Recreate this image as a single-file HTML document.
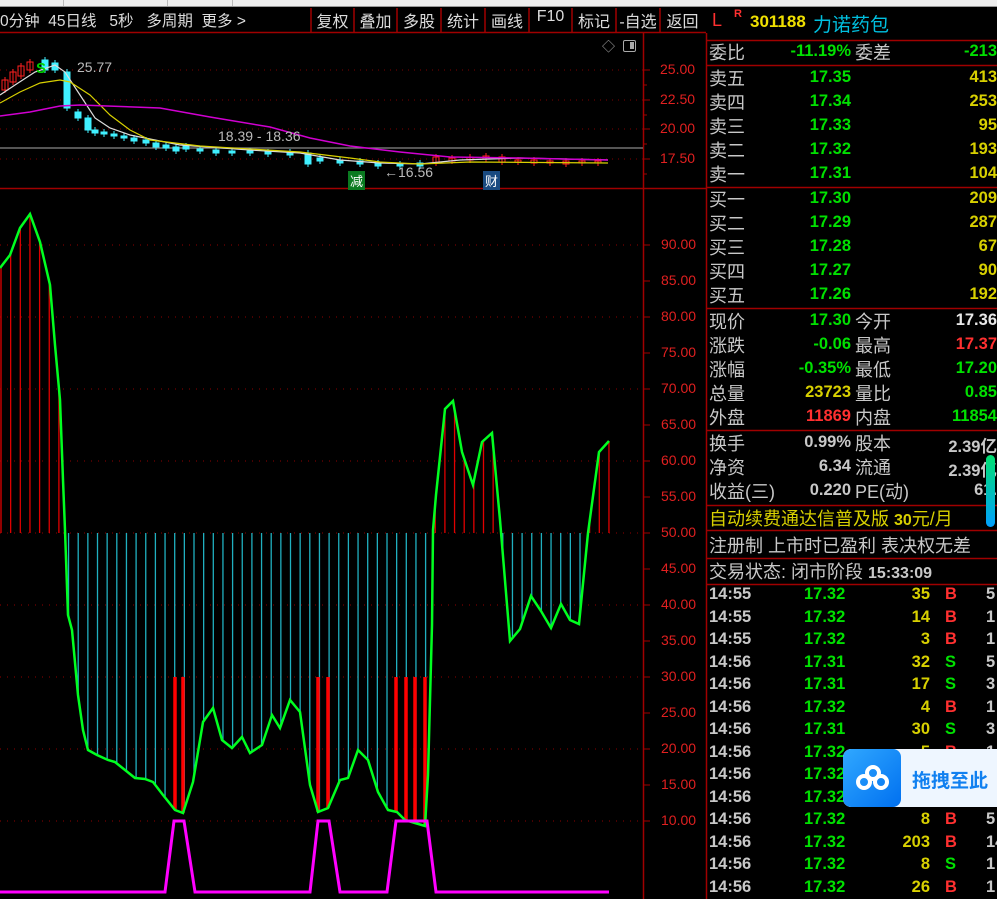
<!DOCTYPE html>
<html><head><meta charset="utf-8">
<style>
*{margin:0;padding:0;box-sizing:border-box}
body{width:997px;height:899px;background:#000;overflow:hidden;position:relative;font-family:"Liberation Sans","Noto Sans CJK SC",sans-serif}
.a{position:absolute;white-space:nowrap}
.g{color:#c8c8c8}
.gr{color:#00e000;font-weight:bold}
.y{color:#d8d000;font-weight:bold}
.r{color:#ff3030;font-weight:bold}
.w{color:#e8e8e8;font-weight:bold}
.gy{color:#c8c8c8;font-weight:bold}
.lab{font-size:18px;color:#c8c8c8;left:709px}
.num{font-size:16.5px;text-align:right}
</style></head><body>
<div class="a" style="left:0;top:0;width:997px;height:7px;background:#eeeeee;border-bottom:1px solid #999"></div>
<div class="a" style="left:63px;top:0;width:1px;height:6px;background:#bbb"></div>
<div class="a" style="left:167px;top:0;width:1px;height:6px;background:#bbb"></div>
<div class="a" style="left:232px;top:0;width:1px;height:6px;background:#bbb"></div>
<svg class="a" style="left:0;top:0" width="997" height="899" id="sv"></svg>
<div class="a g" style="left:0;top:9px;font-size:15.5px;color:#ddd">0分钟&nbsp;&nbsp;45日线&nbsp;&nbsp;&nbsp;5秒&nbsp;&nbsp;&nbsp;多周期&nbsp;&nbsp;更多 &gt;</div>
<div class="a" style="top:8px;left:311px;font-size:16px;color:#ddd;width:395px;display:flex">
<span style="width:43px;text-align:center">复权</span><span style="width:43px;text-align:center">叠加</span><span style="width:44px;text-align:center">多股</span><span style="width:44px;text-align:center">统计</span><span style="width:44px;text-align:center">画线</span><span style="width:43px;text-align:center">F10</span><span style="width:44px;text-align:center">标记</span><span style="width:44px;text-align:center">-自选</span><span style="width:45px;text-align:center">返回</span></div>
<div class="a" style="left:602px;top:36px;color:#aaa;font-size:13px">◇</div>
<div class="a" style="left:623px;top:40px;width:13px;height:12px;border:1.5px solid #aaa;border-radius:2px"><div style="position:absolute;right:1px;top:1px;width:4px;height:7px;background:#aaa"></div></div>
<div class="a" style="left:218px;top:128px;color:#bbb;font-size:14px">18.39 - 18.36</div>
<div class="a" style="left:77px;top:59px;color:#bbb;font-size:14px">25.77</div>
<div class="a" style="left:36px;top:60px;color:#00d000;font-size:15px;font-weight:bold">S</div>
<div class="a" style="left:384px;top:164px;color:#bbb;font-size:14px">←16.56</div>
<div class="a" style="left:348px;top:171px;background:#0a7a20;color:#fff;font-size:13px;padding:0 2px">减</div>
<div class="a" style="left:483px;top:171px;background:#1a4a80;color:#fff;font-size:13px;padding:0 2px">财</div>
<div id="pl"></div>
<div class="a" style="left:712px;top:10px;color:#ff3030;font-size:18px">L</div>
<div class="a" style="left:734px;top:8px;color:#ff3030;font-size:11px;font-weight:bold">R</div>
<div class="a" style="left:750px;top:12px;color:#f0e000;font-size:17px;font-weight:bold">301188</div>
<div class="a" style="left:813px;top:10px;color:#00c0e0;font-size:19px">力诺药包</div>
<div id="rp"></div>
<div class="a" style="left:986px;top:455px;width:9px;height:72px;border-radius:5px;background:linear-gradient(#00e070,#00a0ff)"></div>
<div class="a" style="left:843px;top:749px;width:154px;height:58px;background:#eef6ff;border-radius:8px 0 0 8px;overflow:hidden">
<div style="position:absolute;left:0;top:0;width:58px;height:58px;background:linear-gradient(135deg,#30a8ff,#0070f0);border-radius:8px"></div>
<svg style="position:absolute;left:13px;top:16px" width="34" height="26"><g fill="none" stroke="#fff" stroke-width="4"><circle cx="17" cy="8" r="6"/><circle cx="8" cy="17" r="6"/><circle cx="25" cy="17" r="6"/></g></svg>
<div style="position:absolute;left:69px;top:17px;color:#1080f0;font-size:19px;font-weight:bold">拖拽至此</div></div>
<script>
const S=document.getElementById('sv');let h='';
const L=(x1,y1,x2,y2,c,w,d)=>h+=`<line x1="${x1}" y1="${y1}" x2="${x2}" y2="${y2}" stroke="${c}" stroke-width="${w||1}" ${d?'stroke-dasharray="'+d+'"':''}/>`;
const P=(pts,c,w)=>h+=`<polyline fill="none" stroke="${c}" stroke-width="${w}" points="${pts.map(p=>p.join(',')).join(' ')}"/>`;
L(0,32.5,706,32.5,'#a00000',1.5);
[311,354,397,441,485,529,572,616,660].forEach(x=>L(x,8,x,32,'#a00000',1.5));
L(0,188.5,706,188.5,'#a00000',1.5);
L(643.5,33,643.5,899,'#a00000',1.5);
L(706.5,33,706.5,899,'#a00000',1.5);
[70,100,129,159].forEach(y=>{L(0,y,643,y,'#800000',1,'1 5');L(643,y,650,y,'#a00000',1)});
[85,115,144,174].forEach(y=>L(643,y,647,y,'#a00000',1));
L(0,148,643,148,'#888',1.2);
let t='';
[['25.00',70],['22.50',100],['20.00',129],['17.50',159]].forEach(a=>t+=`<div class="a" style="left:660px;top:${a[1]-9}px;color:#e02020;font-size:14px">${a[0]}</div>`);
const cy=[[5,80,90,'r'],[13,72,82,'r'],[21,66,76,'r'],[30,62,70,'r'],[45,60,70,'c'],[55,63,70,'c'],[67,72,108,'c'],[78,112,118,'c'],[88,118,130,'c'],[95,130,133,'c'],[104,132,134,'c'],[114,134,136,'c'],[124,136,138,'c'],[134,138,141,'c'],[146,140,143,'c'],[156,143,147,'c'],[166,145,148,'c'],[176,147,151,'c'],[186,146,149,'c'],[200,149,151,'c'],[216,150,153,'c'],[232,151,153,'c'],[250,151,153,'c'],[268,152,154,'c'],[290,152,155,'c'],[308,153,164,'c'],[320,158,161,'c'],[340,160,163,'c'],[360,161,164,'c'],[378,163,166,'c'],[400,164,166,'c'],[420,163,166,'c'],[436,157,163,'r'],[452,158,161,'r'],[470,157,160,'r'],[486,156,159,'r'],[502,157,162,'r'],[518,160,162,'r'],[534,160,163,'r'],[550,161,163,'r'],[566,161,164,'r'],[582,161,163,'r'],[598,161,163,'r']];
cy.forEach(c=>{const col=c[3]=='r'?'#ff2020':'#40f0ff';h+=`<line x1="${c[0]}" y1="${c[1]-3}" x2="${c[0]}" y2="${c[2]+3}" stroke="${col}"/><rect x="${c[0]-3}" y="${c[1]}" width="6" height="${c[2]-c[1]}" fill="${c[3]=='r'?'none':col}" stroke="${col}"/>`});
P([[0,95],[15,85],[35,72],[55,65],[65,72],[80,95],[95,118],[110,128],[130,135],[180,145],[250,150],[300,153],[340,160],[380,163],[420,164],[460,160],[520,158],[608,160]],'#ddd',1.2);
P([[0,103],[20,92],[40,83],[60,80],[70,82],[90,95],[110,115],[130,130],[150,140],[200,146],[300,152],[350,158],[380,162],[420,164],[470,162],[608,163]],'#d8d000',1.2);
P([[0,116],[30,112],[60,106],[80,105],[160,108],[210,117],[270,127],[310,138],[350,146],[400,152],[450,157],[520,158],[608,160]],'#d000d0',1.5);
const Y=v=>533-(v-50)*7.2;
[90,80,70,60,50,40,30,20,10].forEach(v=>L(0,Y(v),643,Y(v),'#900000',1,'1 6'));
for(let v=10;v<=90;v+=5){L(643,Y(v),650,Y(v),'#a00000',1);t+=`<div class="a" style="left:661px;top:${Y(v)-9}px;color:#e02020;font-size:14px">${v}.00</div>`}
const ln=[[0,268],[10,255],[20,228],[30,214],[40,242],[50,285],[55,345],[60,400],[63,480],[65,530],[68,615],[72,630],[78,695],[83,730],[88,750],[97,755],[108,760],[115,762],[125,770],[135,778],[145,779],[153,782],[163,795],[175,810],[183,813],[193,782],[203,722],[213,708],[222,740],[232,748],[242,737],[250,753],[262,745],[272,715],[280,728],[290,700],[300,712],[310,785],[318,812],[328,808],[340,780],[348,778],[358,750],[368,760],[378,792],[388,810],[397,812],[405,820],[415,823],[425,826],[428,775],[432,625],[433,530],[436,495],[445,409],[453,401],[462,452],[473,485],[482,442],[492,433],[500,520],[510,641],[520,629],[531,596],[541,611],[551,628],[561,604],[570,620],[579,624],[588,533],[599,452],[609,441]];
const at=x=>{for(let i=1;i<ln.length;i++)if(x<=ln[i][0]){const a=ln[i-1],b=ln[i];return a[1]+(b[1]-a[1])*(x-a[0])/(b[0]-a[0])}return ln[ln.length-1][1]};
for(let x=1;x<=609;x+=9.65){const y=at(x);L(x,533,x,y,y<533?'#e00000':'#20b0c0',1.3)}
[175,183,318,328,396,406,415,425].forEach(x=>L(x,677,x,at(x),'#ff0000',3.5));
P(ln,'#00ff20',2.5);
P([[0,892],[165,892],[174,821],[184,821],[195,892],[310,892],[318,821],[329,821],[340,892],[387,892],[396,821],[427,821],[436,892],[609,892]],'#ff00ff',3);
[40,65,187,308,430,505,530,558,584].forEach(y=>L(706,y+.5,997,y+.5,'#a00000',1.5));
S.innerHTML=h;document.getElementById('pl').innerHTML=t;
let r='';
const row=(c,lab,v1,c1,lab2,v2,c2)=>{r+=`<div class="a lab" style="top:${c-13}px">${lab}</div><div class="a num ${c1}" style="left:770px;width:81px;top:${c-10}px">${v1}</div>`;if(lab2)r+=`<div class="a lab" style="left:855px;top:${c-13}px">${lab2}</div>`;r+=`<div class="a num ${c2}" style="left:900px;width:97px;top:${c-10}px">${v2}</div>`};
row(52,'委比','-11.19%','gr','委差','-213','gr');
[['卖五','17.35','413'],['卖四','17.34','253'],['卖三','17.33','95'],['卖二','17.32','193'],['卖一','17.31','104']].forEach((s,i)=>row(78+i*24,s[0],s[1],'gr','',s[2],'y'));
[['买一','17.30','209'],['买二','17.29','287'],['买三','17.28','67'],['买四','17.27','90'],['买五','17.26','192']].forEach((s,i)=>row(199+i*24,s[0],s[1],'gr','',s[2],'y'));
row(321,'现价','17.30','gr','今开','17.36','w');
row(345,'涨跌','-0.06','gr','最高','17.37','r');
row(369,'涨幅','-0.35%','gr','最低','17.20','gr');
row(393,'总量','23723','y','量比','0.85','gr');
row(417,'外盘','11869','r','内盘','11854','gr');
row(443,'换手','0.99%','gy','股本','2.39亿','gy');
row(467,'净资','6.34','gy','流通','2.39亿','gy');
row(491,'收益(三)','0.220','gy','PE(动)','61.','gy');
r+=`<div class="a" style="left:709px;top:505px;font-size:18px;color:#d8d000">自动续费通达信普及版 <b style="font-size:16px">30</b>元/月</div>`;
r+=`<div class="a" style="left:709px;top:532px;font-size:18px;color:#c8c8c8">注册制 上市时已盈利 表决权无差</div>`;
r+=`<div class="a" style="left:709px;top:558px;font-size:18px;color:#c8c8c8">交易状态: 闭市阶段 <b style="font-size:16px">15:33:09</b></div>`;
const tk=[['14:55','17.32','35','B','5'],['14:55','17.32','14','B','1'],['14:55','17.32','3','B','1'],['14:56','17.31','32','S','5'],['14:56','17.31','17','S','3'],['14:56','17.32','4','B','1'],['14:56','17.31','30','S','3'],['14:56','17.32','5','B','1'],['14:56','17.32','','',''],['14:56','17.32','','',''],['14:56','17.32','8','B','5'],['14:56','17.32','203','B','14'],['14:56','17.32','8','S','1'],['14:56','17.32','26','B','1']];
tk.forEach((k,i)=>{const c=595+i*22.5;r+=`<div class="a gy" style="left:709px;top:${c-10}px;font-size:16.5px">${k[0]}</div><div class="a gr" style="left:804px;top:${c-10}px;font-size:16.5px">${k[1]}</div><div class="a num y" style="left:880px;width:50px;top:${c-10}px">${k[2]}</div><div class="a ${k[3]=='B'?'r':'gr'}" style="left:945px;top:${c-10}px;font-size:16.5px">${k[3]}</div><div class="a gy" style="left:986px;top:${c-10}px;font-size:16.5px">${k[4]}</div>`});
document.getElementById('rp').innerHTML=r;
</script>
</body></html>
